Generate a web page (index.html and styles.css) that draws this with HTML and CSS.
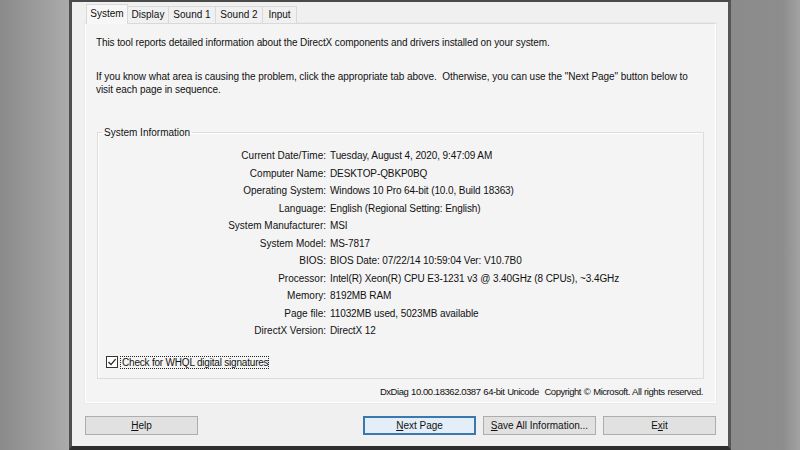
FILE: index.html
```html
<!DOCTYPE html>
<html lang="en">
<head>
<meta charset="utf-8">
<title>DirectX Diagnostic Tool</title>
<link rel="stylesheet" href="styles.css">
</head>
<body>
<div class="screen">
  <div class="side side-left"></div>
  <div class="window">
    <div class="tabs">
      <div class="tab tab-active">System</div>
      <div class="tab">Display</div>
      <div class="tab">Sound 1</div>
      <div class="tab">Sound 2</div>
      <div class="tab">Input</div>
    </div>
    <div class="panel">
      <p class="intro">This tool reports detailed information about the DirectX components and drivers installed on your system.</p>
      <p class="intro intro-2">If you know what area is causing the problem, click the appropriate tab above.&nbsp; Otherwise, you can use the "Next Page" button below to<br>visit each page in sequence.</p>
      <fieldset class="group">
        <legend class="group-title">System Information</legend>
        <div class="info">
          <div class="info-label">Current Date/Time:</div><div class="info-value">Tuesday, August 4, 2020, 9:47:09 AM</div>
          <div class="info-label">Computer Name:</div><div class="info-value">DESKTOP-QBKP0BQ</div>
          <div class="info-label">Operating System:</div><div class="info-value">Windows 10 Pro 64-bit (10.0, Build 18363)</div>
          <div class="info-label">Language:</div><div class="info-value">English (Regional Setting: English)</div>
          <div class="info-label">System Manufacturer:</div><div class="info-value">MSI</div>
          <div class="info-label">System Model:</div><div class="info-value">MS-7817</div>
          <div class="info-label">BIOS:</div><div class="info-value">BIOS Date: 07/22/14 10:59:04 Ver: V10.7B0</div>
          <div class="info-label">Processor:</div><div class="info-value">Intel(R) Xeon(R) CPU E3-1231 v3 @ 3.40GHz (8 CPUs), ~3.4GHz</div>
          <div class="info-label">Memory:</div><div class="info-value">8192MB RAM</div>
          <div class="info-label">Page file:</div><div class="info-value">11032MB used, 5023MB available</div>
          <div class="info-label">DirectX Version:</div><div class="info-value">DirectX 12</div>
        </div>
        <div class="whql">
          <svg class="checkbox" width="12" height="12" viewBox="0 0 12 12" aria-hidden="true">
            <rect x="0.5" y="0.5" width="11" height="11" fill="#ffffff" stroke="#333333"/>
            <path d="M2.5 6 L5 8.6 L9.6 3.2" fill="none" stroke="#222222" stroke-width="1.3"/>
          </svg>
          <span class="whql-text">Check for WHQL digital signatures</span>
        </div>
      </fieldset>
      <div class="copyright">DxDiag 10.00.18362.0387 64-bit Unicode&nbsp; Copyright © Microsoft. All rights reserved.</div>
    </div>
    <div class="buttons">
      <div class="btn"><u>H</u>elp</div>
      <div class="btn-group">
        <div class="btn btn-default"><u>N</u>ext Page</div>
        <div class="btn"><u>S</u>ave All Information...</div>
        <div class="btn">E<u>x</u>it</div>
      </div>
    </div>
  </div>
  <div class="side side-right"></div>
</div>
</body>
</html>
```
FILE: styles.css
```css
* { box-sizing: border-box; }

html, body {
  margin: 0;
  padding: 0;
  width: 800px;
  height: 450px;
  overflow: hidden;
  background: #8c8c8c;
  font-family: "Liberation Sans", Arial, sans-serif;
  font-size: 10px;
  color: #111111;
}

.screen {
  display: flex;
  width: 800px;
  height: 450px;
}

.side {
  width: 69px;
  flex: none;
}

.side-left {
  background: linear-gradient(to right, #8a8a8a 0%, #9c9c9c 55%, #ababab 100%);
}

.side-right {
  background: linear-gradient(to right, #8b8b8b 0%, #8d8d8d 75%, #a2a2a2 100%);
}

.window {
  width: 662px;
  flex: none;
  display: flex;
  flex-direction: column;
  background: #f0f0f0;
  border-style: solid;
  border-width: 2px 3px 4px 3px;
  border-color: #4a4a4a #555555 #2e2e2e #4e4e4e;
  padding: 2px 12px 11px 13px;
}

.tabs {
  display: flex;
  align-items: flex-end;
  height: 19px;
  padding-left: 1px;
  position: relative;
  z-index: 1;
}

.tab {
  height: 17px;
  line-height: 16px;
  padding: 0;
  text-align: center;
  border: 1px solid #d9d9d9;
  border-bottom: none;
  margin-left: -1px;
  background: #f0f0f0;
}

.tab:nth-child(1) { width: 42px; margin-left: 0; }
.tab:nth-child(2) { width: 42px; }
.tab:nth-child(3) { width: 48px; }
.tab:nth-child(4) { width: 48px; }
.tab:nth-child(5) { width: 35px; }

.tab-active {
  height: 20px;
  line-height: 18px;
  background: #f7f7f7;
  margin-bottom: -1px;
}

.panel {
  height: 380px;
  background: #f4f4f4;
  border: 1px solid #ffffff;
  border-top-color: #d9d9d9;
  box-shadow: 0 0 0 0.5px #e2e2e2;
  padding: 12px 10px 0 10px;
  line-height: 13px;
}

.intro {
  margin: 0;
  letter-spacing: -0.1px;
}

.intro-2 {
  margin-top: 21px;
  letter-spacing: -0.05px;
}

.group {
  margin: 30px 1px 0 1px;
  padding: 0 0 9px 0;
  border: 1px solid #dcdcdc;
  box-shadow: inset 1px 1px 0 #ffffff;
  min-inline-size: 0;
}

.group-title {
  margin-left: 4px;
  padding: 0 2px;
  line-height: 13px;
}

.info {
  display: grid;
  grid-template-columns: 228px 1fr;
  column-gap: 4px;
  grid-auto-rows: 17.5px;
  align-items: center;
  margin-top: 8px;
}

.info-label {
  text-align: right;
  white-space: nowrap;
}

.info-value {
  white-space: nowrap;
  letter-spacing: -0.1px;
}

.whql {
  display: flex;
  align-items: center;
  margin-top: 16px;
  margin-left: 8px;
  height: 13px;
}

.checkbox {
  flex: none;
  margin-right: 2px;
}

.whql-text {
  border: 1px dotted #222222;
  line-height: 11px;
  padding: 0 0 0 1px;
  letter-spacing: -0.2px;
}

.copyright {
  margin-top: 6px;
  text-align: right;
  padding-right: 2px;
  font-size: 9.5px;
  letter-spacing: -0.45px;
  word-spacing: 0.6px;
}

.buttons {
  display: flex;
  justify-content: space-between;
  margin-top: 13px;
}

.btn-group {
  display: flex;
  gap: 7px;
}

.btn {
  width: 113px;
  height: 19px;
  line-height: 17px;
  text-align: center;
  background: #e1e1e1;
  border: 1px solid #adadad;
}

.btn u {
  text-decoration: underline;
  text-underline-offset: 1px;
}

.btn-default {
  background: #e3eef8;
  border: 2px solid #3a78b0;
  line-height: 15px;
}
```
